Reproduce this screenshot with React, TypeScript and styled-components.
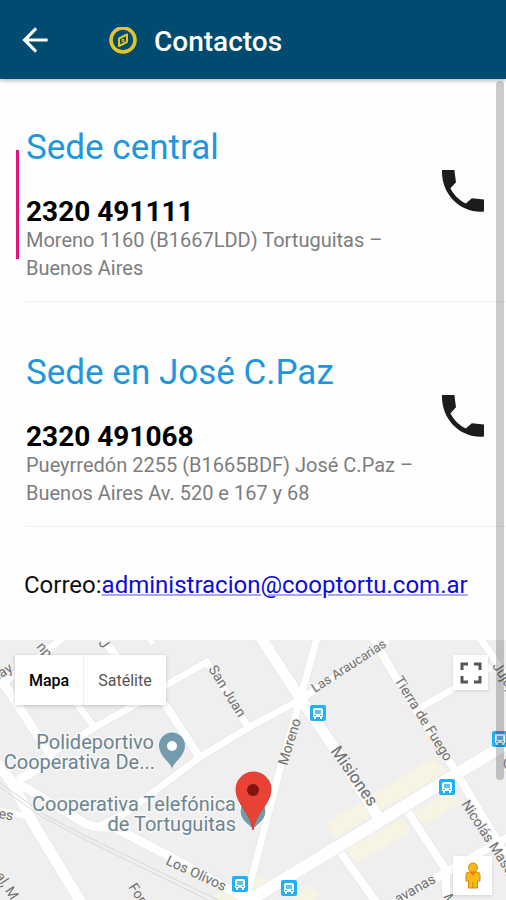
import React from "react";
import styled, { createGlobalStyle } from "styled-components";

const GlobalStyle = createGlobalStyle`
  *, *::before, *::after { box-sizing: border-box; }
  body {
    margin: 0;
    background: #fefefe;
    color: #000;
    font-family: Roboto, "Liberation Sans", sans-serif;
  }
`;

const Page = styled.div`
  position: relative;
  display: flex;
  flex-direction: column;
  min-height: 100vh;
`;

const Header = styled.header`
  display: flex;
  align-items: center;
  height: 79px;
  padding-left: 16px;
  background: #004b70;
  box-shadow: 0 1px 5px rgba(0, 0, 0, 0.35);
  z-index: 1;
`;

const BackButton = styled.button`
  display: flex;
  padding: 0;
  border: 0;
  background: none;
  color: #fff;
  cursor: pointer;
`;

const Title = styled.h1`
  display: flex;
  align-items: center;
  gap: 16px;
  margin: 0 0 0 54px;
  padding-top: 4px;
  color: #fff;
  font-size: 28px;
  line-height: 32px;
  font-weight: 500;
`;

const ContactList = styled.ul`
  display: flex;
  flex-direction: column;
  gap: 2px;
  margin: 0;
  padding: 0;
  list-style: none;
`;

const ContactItem = styled.li`
  display: flex;
`;

const Marker = styled.span<{ $active?: boolean }>`
  flex: none;
  width: 3px;
  margin: 71px 7px 43px 16px;
  background: ${({ $active }) => ($active ? "#e0127c" : "transparent")};
`;

const ContactBody = styled.div`
  display: flex;
  flex: 1;
  align-items: center;
  justify-content: space-between;
  padding: 48px 15px 19px 0;
  border-bottom: 1px solid #f1f1f1;
`;

const Office = styled.h2`
  margin: 0 0 28px;
  color: #2196dc;
  font-size: 35px;
  line-height: 42px;
  font-weight: 400;
`;

const Phone = styled.p`
  margin: 0;
  font-size: 28px;
  line-height: 29px;
  font-weight: 700;
`;

const Address = styled.address`
  color: #7d7d7d;
  font-size: 20px;
  line-height: 28px;
  font-style: normal;
  white-space: pre-line;
`;

const CallLink = styled.a`
  display: flex;
  flex: none;
  height: 56px;
  margin-top: -28px;
  color: #1c1c1c;
`;

const Mail = styled.p`
  margin: 0;
  padding: 43px 24px 40px;
  font-size: 24px;
  line-height: 30px;
  color: #111;
`;

const MailLink = styled.a`
  color: #0b0be0;
  text-decoration-color: #a9a9f2;
  text-decoration-thickness: 2px;
`;

const MapPanel = styled.section`
  position: relative;
  display: flex;
  flex: 1;
  min-height: 260px;
  overflow: hidden;
`;

const MapDrawing = styled.svg`
  position: absolute;
  inset: 0;
  width: 100%;
  height: 100%;
`;

const MapControls = styled.div`
  position: relative;
  display: flex;
  flex: 1;
  justify-content: space-between;
  padding: 15px 14px 5px 15px;
`;

const MapTypes = styled.div`
  display: flex;
  align-self: flex-start;
  height: 50px;
  background: #fff;
  box-shadow: 0 1px 4px rgba(0, 0, 0, 0.2);
`;

const MapType = styled.button<{ $active?: boolean }>`
  padding: 0 14px;
  border: 0;
  border-left: ${({ $active }) => ($active ? "0" : "1px solid #eee")};
  background: #fff;
  color: ${({ $active }) => ($active ? "#000" : "#555")};
  font: ${({ $active }) => ($active ? 500 : 400)} 16px Roboto, "Liberation Sans", sans-serif;
  cursor: pointer;
`;

const MapTools = styled.div`
  display: flex;
  flex-direction: column;
  justify-content: space-between;
  align-items: center;
`;

const MapTool = styled.button<{ $size: number }>`
  display: flex;
  align-items: center;
  justify-content: center;
  width: ${({ $size }) => $size}px;
  height: ${({ $size }) => $size}px;
  margin-right: ${({ $size }) => 39 - $size}px;
  padding: 0;
  border: 0;
  background: #fff;
  box-shadow: 0 1px 3px rgba(0, 0, 0, 0.12);
  cursor: pointer;
`;

const ScrollThumb = styled.div`
  position: absolute;
  top: 81px;
  right: 2px;
  bottom: 120px;
  width: 8px;
  border-radius: 4px;
  background: rgba(0, 0, 0, 0.2);
  z-index: 2;
`;

const contacts = [
  {
    office: "Sede central",
    phone: "2320 491111",
    address: "Moreno 1160 (B1667LDD) Tortuguitas –\nBuenos Aires",
    active: true,
  },
  {
    office: "Sede en José C.Paz",
    phone: "2320 491068",
    address: "Pueyrredón 2255 (B1665BDF) José C.Paz –\nBuenos Aires Av. 520 e 167 y 68",
    active: false,
  },
];

const roads: { d: string; w: number }[] = [
  { d: "M260-4 300 58 331 103 380 180", w: 11 },
  { d: "M317-2 300 60 281 125 255 225 246 262", w: 7 },
  { d: "M388 0 300 60 253 85 200 117 127 172 98 187", w: 7 },
  { d: "M50 114 97 86 133 66 170 43 207 22 250 90", w: 7 },
  { d: "M102-2 116 16 167 67 200 118", w: 8 },
  { d: "M60 40 80 68 95 88", w: 7 },
  { d: "M0 38 50 114Q40 130 18 140", w: 9 },
  { d: "M0 46 66-4", w: 7 },
  { d: "M148-3 153 4", w: 5 },
  { d: "M-3 123 12 142 33 183 82 264", w: 11 },
  { d: "M10 140 30 150 86 184Q94 188 113 187L167 215 245 258", w: 9 },
  { d: "M-2 170 30 177", w: 6 },
  { d: "M245 263 380 181 453 136 510 102", w: 12 },
  { d: "M373-2 396 38 453 127 506 215", w: 8 },
  { d: "M510 196 446 232 392 264", w: 8 },
  { d: "M408 172 446 230V264", w: 8 },
  { d: "M341 213 376 262", w: 8 },
  { d: "M420 68 491 27", w: 7 },
  { d: "M480-2 510 42", w: 7 },
];

const labels: { text: string; x: number; y: number; angle: number; size: number }[] = [
  { text: "San Juan", x: 208, y: 29, angle: 58, size: 14 },
  { text: "Las Araucarias", x: 315, y: 53, angle: -33, size: 13 },
  { text: "Moreno", x: 287, y: 126, angle: -73, size: 14 },
  { text: "Misiones", x: 330, y: 111, angle: 55, size: 17 },
  { text: "Tierra de Fuego", x: 394, y: 40, angle: 58, size: 14 },
  { text: "Jujuy", x: 492, y: 26, angle: 57, size: 14 },
  { text: "Nicolás Mascardi", x: 461, y: 164, angle: 57, size: 14 },
  { text: "Los Olivos", x: 165, y: 224, angle: 25, size: 14 },
  { text: "For", x: 128, y: 247, angle: 57, size: 14 },
  { text: "avanas", x: 398, y: 264, angle: -30, size: 14 },
  { text: "al, M", x: -5, y: 236, angle: 57, size: 14 },
  { text: "M", x: 443, y: 256, angle: 70, size: 14 },
  { text: "es", x: -2, y: 178, angle: 10, size: 14 },
  { text: "nay", x: -5, y: 42, angle: -32, size: 14 },
  { text: "np", x: 36, y: 7, angle: 50, size: 14 },
  { text: "J", x: 98, y: 3, angle: 55, size: 14 },
  { text: "C", x: 503, y: 129, angle: 0, size: 14 },
];

const busStops = [
  [310, 65],
  [492, 91],
  [439, 139],
  [232, 236],
  [281, 240],
];

const StreetText = styled.text`
  fill: #707070;
  stroke: #f3f3f3;
  stroke-width: 2px;
  paint-order: stroke;
`;

const PlaceText = styled.text`
  fill: #6d858f;
  stroke: #f7f7f7;
  stroke-width: 3px;
  paint-order: stroke;
  font-size: 20px;
  text-anchor: end;
`;

function CityMap() {
  return (
    <MapDrawing viewBox="0 0 506 260" preserveAspectRatio="xMidYMid slice" role="img" aria-label="Mapa de Tortuguitas">
      <rect x="-500" y="-500" width="1506" height="1260" fill="#efefef" />
      <g fill="#f8f4e3">
        <path d="M326 183 433 118 447 131 335 198Z" />
        <path d="M345 210 403 178 411 192 358 223Z" />
        <path d="M413 173 451 149 460 163 423 186Z" />
        <path d="M250 232 270 240 253 254ZM290 262 310 245 320 254 312 262ZM212 258 228 251 246 262Z" />
      </g>
      <g fill="none" stroke="#e3e3e3" strokeLinejoin="round">
        {roads.map((r) => (
          <path key={r.d} d={r.d} strokeWidth={r.w + 1} />
        ))}
      </g>
      <g fill="none" stroke="#fff" strokeLinejoin="round">
        {roads.map((r) => (
          <path key={r.d} d={r.d} strokeWidth={r.w} />
        ))}
      </g>
      <g fill="none" stroke="#d5d8d8" strokeWidth="1">
        <path d="M0 143 45 175 90 198 222 262" />
        <path d="M0 147 42 177 88 201 212 262" />
      </g>
      {labels.map((l) => (
        <StreetText key={l.text + l.x} fontSize={l.size} transform={`translate(${l.x} ${l.y}) rotate(${l.angle})`}>
          {l.text}
        </StreetText>
      ))}
      {busStops.map(([x, y]) => (
        <g key={x} transform={`translate(${x} ${y})`}>
          <rect width="16" height="16" rx="2" fill="#1fb0f5" />
          <path d="M3 5Q3 3 5 3H11Q13 3 13 5V12H12V14H10V12H6V14H4V12H3Z" fill="#fff" />
          <path d="M5 5H11V9H5Z" fill="#58c5f8" />
          <path d="M4 10H6V11H4ZM10 10H12V11H10Z" fill="#1fb0f5" />
        </g>
      ))}
      <PlaceText x="154" y="109">Polideportivo</PlaceText>
      <PlaceText x="155" y="129">Cooperativa De...</PlaceText>
      <PlaceText x="236" y="171">Cooperativa Telefónica</PlaceText>
      <PlaceText x="236" y="191">de Tortuguitas</PlaceText>
      <path d="M172 129C171 122 159 117 159 105.500A13 13 0 0 1 185 105.500C185 117 173 122 172 129Z" fill="#739bac" />
      <circle cx="172" cy="106" r="5" fill="#fff" />
      <path d="M253 190C252 186 240 182 240 171A13 13 0 0 1 266 171C266 182 254 186 253 190Z" fill="#739bac" stroke="#fff" />
      <path d="M253 190C251 173 236 164 236 149.500A17.500 17.500 0 0 1 271 149.500C271 164 255 173 253 190Z" fill="#ea4335" stroke="#d93a2f" strokeWidth="1" />
      <circle cx="253" cy="150" r="6" fill="#811411" />
    </MapDrawing>
  );
}

export default function App() {
  return (
    <>
      <GlobalStyle />
      <Page>
        <Header>
          <BackButton aria-label="Volver">
            <svg width="38" height="38" viewBox="0 0 24 24" fill="currentColor">
              <path d="M20 11H7.830l5.590-5.590L12 4l-8 8 8 8 1.410-1.410L7.830 13H20v-2z" />
            </svg>
          </BackButton>
          <Title>
            <svg width="30" height="30" viewBox="0 0 30 30" fill="none" stroke="#e3c526" aria-hidden="true">
              <circle cx="15" cy="13" r="12" strokeWidth="3.600" />
              <path d="M19 7.500V15L11 19V11.500Z" strokeWidth="2" strokeLinejoin="round" />
              <path d="M14 12.500H16V14.500H14Z" strokeWidth="1" />
            </svg>
            Contactos
          </Title>
        </Header>
        <main>
          <ContactList>
            {contacts.map((c) => (
              <ContactItem key={c.office}>
                <Marker $active={c.active} />
                <ContactBody>
                  <div>
                    <Office>{c.office}</Office>
                    <Phone>{c.phone}</Phone>
                    <Address>{c.address}</Address>
                  </div>
                  <CallLink href={`tel:${c.phone.replace(" ", "")}`} aria-label={`Llamar a ${c.office}`}>
                    <svg width="56" height="56" viewBox="0 0 24 24" fill="currentColor">
                      <path d="M3 3H8.300L9 8.200 6.620 10.790C8.060 13.620 10.380 15.940 13.210 17.380L15.800 15.100 21 15.600V20.800C11.500 21.700 2.600 14 3 3Z" />
                    </svg>
                  </CallLink>
                </ContactBody>
              </ContactItem>
            ))}
          </ContactList>
          <Mail>
            Correo:<MailLink href="mailto:administracion@cooptortu.com.ar">administracion@cooptortu.com.ar</MailLink>
          </Mail>
        </main>
        <MapPanel aria-label="Ubicación">
          <CityMap />
          <MapControls>
            <MapTypes>
              <MapType $active>Mapa</MapType>
              <MapType>Satélite</MapType>
            </MapTypes>
            <MapTools>
              <MapTool $size={35} aria-label="Pantalla completa">
                <svg width="22" height="22" viewBox="0 0 22 22" fill="none" stroke="#555" strokeWidth="3">
                  <path d="M2 8V2H8M14 2H20V8M20 14V20H14M8 20H2V14" />
                </svg>
              </MapTool>
              <MapTool $size={39} aria-label="Street View">
                <svg width="18" height="28" viewBox="0 0 18 28" fill="#fbb917" stroke="#c98a16" strokeWidth="1">
                  <path d="M5 10H13Q16 10 16 13V19H13.500V26H4.500V19H2V13Q2 10 5 10Z" />
                  <circle cx="9" cy="5.500" r="4.500" />
                  <path d="M6 10 9 14 12 10Z" fill="#ee7a1c" stroke="none" />
                  <path d="M9 20V26" />
                </svg>
              </MapTool>
            </MapTools>
          </MapControls>
        </MapPanel>
        <ScrollThumb />
      </Page>
    </>
  );
}
